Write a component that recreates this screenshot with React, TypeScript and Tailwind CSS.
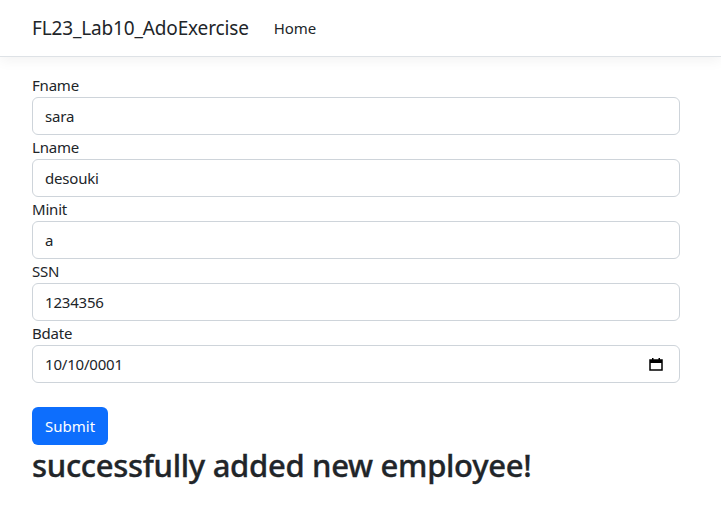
import React from "react";

const fields = [
  { label: "Fname", value: "sara" },
  { label: "Lname", value: "desouki" },
  { label: "Minit", value: "a" },
  { label: "SSN", value: "1234356" },
];

export default function App() {
  return (
    <div className="min-h-[519px] bg-white text-[#212529]" style={{ fontFamily: '"Noto Sans", "Open Sans", sans-serif' }}>
      <nav className="h-[57px] border-b border-[#dee2e6] shadow-[0_4px_12px_rgba(0,0,0,0.05)] flex items-center px-8">
        <span className="text-[19px] tracking-[-0.15px] mr-[25px]">FL23_Lab10_AdoExercise</span>
        <span className="text-[15px] tracking-[-0.1px]">Home</span>
      </nav>
      <div className="px-8 pt-4 w-[712px]">
        {fields.map((f) => (
          <div key={f.label}>
            <div className="h-6 leading-6 text-[15px] tracking-[-0.2px]">{f.label}</div>
            <div className="h-[38px] border border-[#ced4da] rounded-[6px] flex items-center px-3 text-[15px] tracking-[-0.2px]">
              {f.value}
            </div>
          </div>
        ))}
        <div>
          <div className="h-6 leading-6 text-[15px] tracking-[-0.2px]">Bdate</div>
          <div className="h-[38px] border border-[#ced4da] rounded-[6px] flex items-center justify-between pl-3 pr-[16px] text-[15px] tracking-[-0.2px]">
            <span>10/10/0001</span>
            <svg width="14" height="14" viewBox="0 0 14 14">
              <rect x="1" y="3" width="12" height="10" fill="none" stroke="#000" strokeWidth="1.5" />
              <rect x="1" y="3" width="12" height="3" fill="#000" />
              <rect x="3" y="1" width="1.5" height="3" fill="#000" />
              <rect x="9.5" y="1" width="1.5" height="3" fill="#000" />
            </svg>
          </div>
        </div>
        <div className="h-6" />
        <button className="h-[38px] px-[13px] bg-[#0d6efd] text-white rounded-[6px] text-[15px] tracking-[0px]">
          Submit
        </button>
        <h1 className="text-[31px] font-[500] leading-[1.2] mt-[2px] tracking-[-0.3px]" style={{ WebkitTextStroke: "0.35px #212529" }}>successfully added new employee!</h1>
      </div>
    </div>
  );
}
